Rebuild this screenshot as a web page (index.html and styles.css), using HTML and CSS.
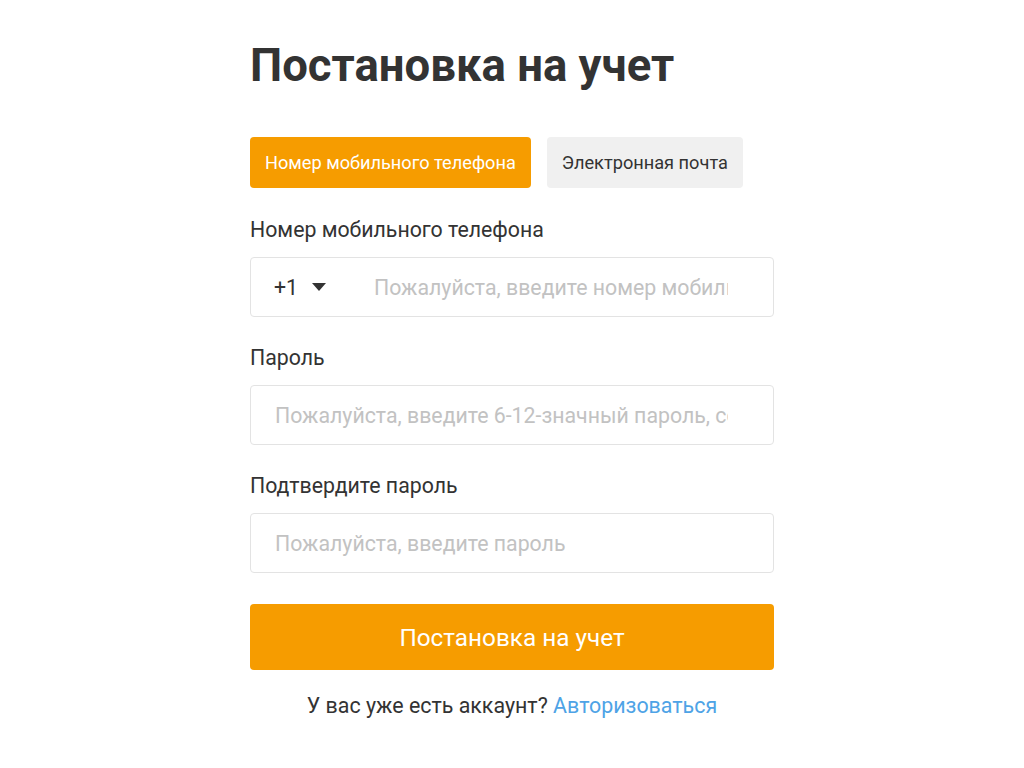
FILE: index.html
```html
<!DOCTYPE html>
<html lang="ru">
<head>
<meta charset="utf-8">
<title>Постановка на учет</title>
<link rel="stylesheet" href="styles.css">
</head>
<body>
<main class="page">
  <h1 class="title">Постановка на учет</h1>
  <div class="tabs">
    <button class="tab tab-active">Номер мобильного телефона</button>
    <button class="tab">Электронная почта</button>
  </div>
  <div class="field">
    <label class="label" for="phone">Номер мобильного телефона</label>
    <div class="input-box">
      <span class="code">+1
        <svg class="caret" width="14" height="10" viewBox="0 0 14 10"><path d="M0 1h14L7 9z" fill="#333"/></svg>
      </span>
      <input id="phone" class="input" type="text" placeholder="Пожалуйста, введите номер мобильного телефона">
    </div>
  </div>
  <div class="field">
    <label class="label" for="pwd">Пароль</label>
    <div class="input-box">
      <input id="pwd" class="input" type="password" placeholder="Пожалуйста, введите 6-12-значный пароль, состоящий из букв и цифр">
    </div>
  </div>
  <div class="field">
    <label class="label" for="pwd2">Подтвердите пароль</label>
    <div class="input-box">
      <input id="pwd2" class="input" type="password" placeholder="Пожалуйста, введите пароль">
    </div>
  </div>
  <button class="submit">Постановка на учет</button>
  <p class="footer">У вас уже есть аккаунт? <a class="link" href="#">Авторизоваться</a></p>
</main>
</body>
</html>
```

FILE: styles.css
```css
* { box-sizing: border-box; }
html, body { margin: 0; padding: 0; background: #fff; }
body { font-family: Roboto, "Noto Sans", sans-serif; color: #333; }
.page { width: 524px; margin: 0 0 0 250px; padding-top: 40px; }
.title { margin: 0; font-size: 45.5px; font-weight: 700; line-height: 52px; color: #333; }
.tabs { display: flex; gap: 16px; margin-top: 45px; }
.tab { height: 51px; padding: 0 15px; border: none; border-radius: 4px; font-family: inherit; font-size: 18.2px; background: #f0f0f0; color: #333; }
.tab-active { background: #f69c00; color: #fff; }
.field { margin-top: 27px; }
.tabs + .field { margin-top: 28px; }
.label { display: block; font-size: 21.3px; line-height: 28px; margin-bottom: 13px; color: #333; }
.input-box { height: 60px; border: 1px solid #e3e3e3; border-radius: 4px; display: flex; align-items: center; padding: 0 45px 0 0; overflow: hidden; }
.input { flex: 1; min-width: 0; height: 100%; border: none; outline: none; background: transparent; padding: 0 0 0 24px; font-family: inherit; font-size: 21.3px; color: #333; }
.input::placeholder { color: #c2c2c2; }
.code { display: flex; align-items: center; gap: 14px; padding-left: 23px; width: 123px; flex-shrink: 0; font-size: 21.3px; color: #333; }
.code + .input { padding-left: 0; }
.caret { display: block; }
.submit { display: block; width: 100%; height: 66px; margin-top: 31px; border: none; border-radius: 4px; background: #f69c00; color: #fff; font-family: inherit; font-size: 24.3px; }
.footer { margin: 22px 0 0; text-align: center; font-size: 21.4px; line-height: 28px; color: #333; }
.link { color: #4ea3e6; text-decoration: none; }
```
